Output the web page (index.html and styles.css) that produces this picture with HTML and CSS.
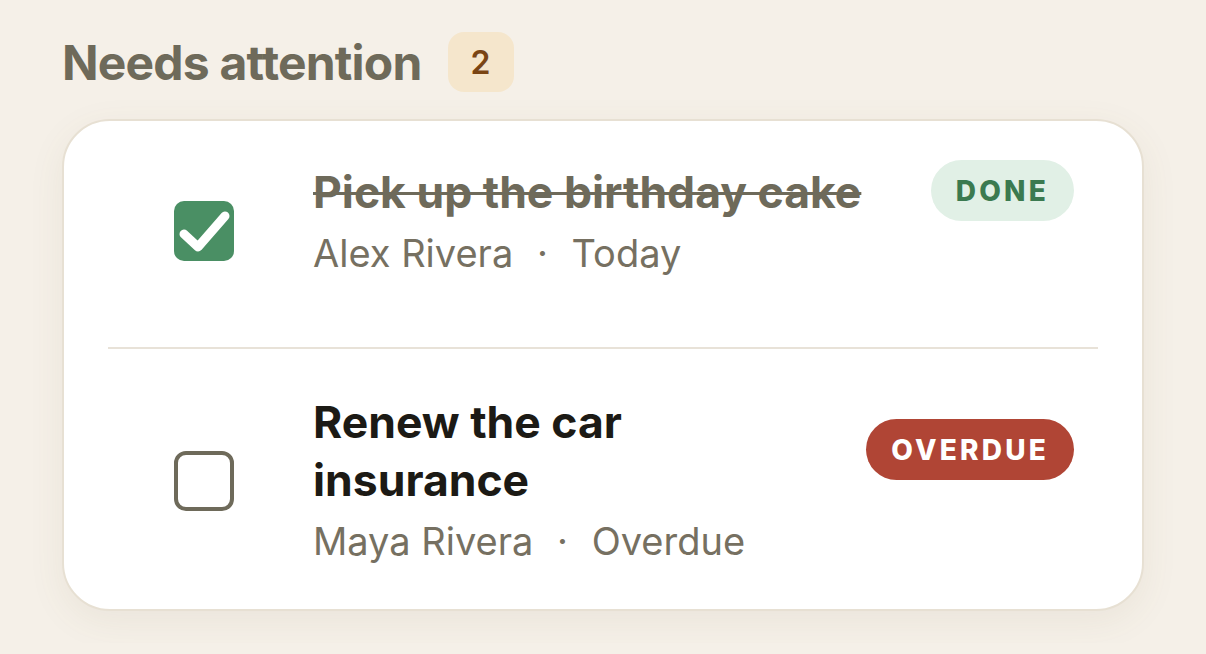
FILE: index.html
```html
<!DOCTYPE html>
<html lang="en">
<head>
  <meta charset="UTF-8">
  <meta name="viewport" content="width=device-width, initial-scale=1.0">
  <title>Needs attention</title>
  <link rel="stylesheet" href="styles.css">
</head>
<body>
  <div class="section-head">
    <h2>Needs attention</h2>
    <span class="count">2</span>
  </div>

  <div class="card">
    <div class="task task-first">
      <div class="check-wrap">
        <span class="check done">
          <svg viewBox="0 0 60 60" width="60" height="60">
            <path d="M10 33 L24 46 L51 15" fill="none" stroke="#fff" stroke-width="9" stroke-linecap="round" stroke-linejoin="round"/>
          </svg>
        </span>
      </div>
      <div class="task-body">
        <div class="task-title struck">Pick up the birthday cake</div>
        <div class="task-meta">Alex Rivera <span class="dot">·</span> Today</div>
      </div>
      <span class="pill pill-done">DONE</span>
    </div>

    <div class="divider"></div>

    <div class="task task-second">
      <div class="check-wrap">
        <span class="check"></span>
      </div>
      <div class="task-body">
        <div class="task-title">Renew the car insurance</div>
        <div class="task-meta">Maya Rivera <span class="dot">·</span> Overdue</div>
      </div>
      <span class="pill pill-overdue">OVERDUE</span>
    </div>
  </div>
</body>
</html>
```

FILE: styles.css
```css
body {
  margin: 0;
  padding: 32px 62px;
  font-family: Inter, "Noto Sans", sans-serif;
  background-color: #f5f0e8;
  color: #1c1a15;
}
.section-head {
  display: flex;
  align-items: center;
  gap: 26px;
  margin-bottom: 27px;
}
.section-head h2 {
  margin: 0;
  font-size: 48px;
  font-weight: 700;
  letter-spacing: -0.8px;
  color: #6e6a5a;
}
.count {
  width: 66px;
  height: 60px;
  border-radius: 16px;
  background: #f5e6cc;
  color: #7a4514;
  font-size: 32px;
  font-weight: 600;
  display: flex;
  align-items: center;
  justify-content: center;
}
.card {
  background: #fff;
  border: 2px solid #e7e0d3;
  border-radius: 48px;
  padding: 0 44px;
  box-shadow: 0 10px 36px rgba(120, 100, 60, 0.08);
}
.task {
  display: flex;
  align-items: center;
  padding-right: 24px;
}
.task-first {
  padding-top: 42px;
  padding-bottom: 69px;
}
.task-second {
  padding-top: 44px;
  padding-bottom: 43px;
}
.check-wrap {
  width: 205px;
  box-sizing: border-box;
  padding-left: 66px;
  flex-shrink: 0;
  display: flex;
}
.task-first .check-wrap {
  margin-top: 21px;
}
.task-second .check-wrap {
  margin-top: 3px;
}
.check {
  width: 60px;
  height: 60px;
  box-sizing: border-box;
  border: 4px solid #6e6a5a;
  border-radius: 12px;
}
.check.done {
  border: none;
  border-radius: 10px;
  background: #4a8f64;
}
.check svg {
  display: block;
}
.task-body {
  flex: 1;
  min-width: 0;
}
.task-title {
  font-size: 44.5px;
  font-weight: 700;
  line-height: 58px;
  max-width: 400px;
}
.task-first .task-title {
  max-width: none;
}
.struck {
  color: #6e6a5a;
  text-decoration: line-through;
  text-decoration-thickness: 3px;
}
.task-meta {
  margin-top: 7px;
  font-size: 38px;
  line-height: 50px;
  color: #767061;
}
.dot {
  margin: 0 13px;
}
.pill {
  margin: -3px 0 57px;
  border-radius: 31px;
  padding: 0 25px;
  height: 61px;
  display: flex;
  align-items: center;
  font-size: 28px;
  font-weight: 800;
  letter-spacing: 3.2px;
}
.pill-done {
  background: #e1f0e6;
  color: #3b7a50;
}
.pill-overdue {
  background: #b04535;
  color: #fff;
}
.divider {
  height: 2px;
  background: #e8e2d8;
}
```
